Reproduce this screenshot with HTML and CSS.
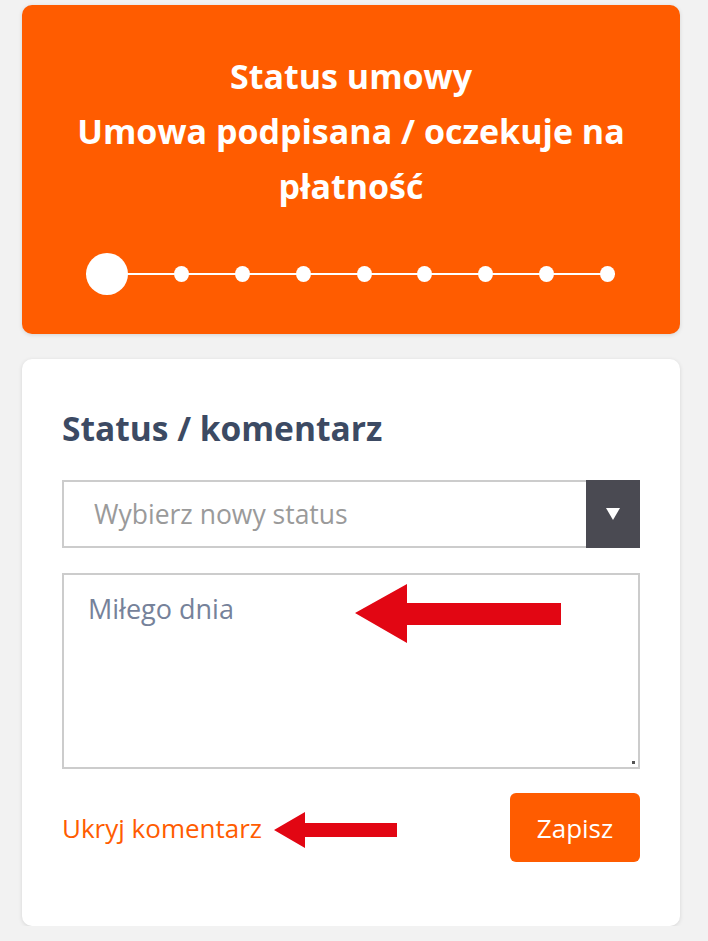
FILE: index.html
```html
<!DOCTYPE html>
<html lang="pl">
<head>
<meta charset="utf-8">
<link rel="stylesheet" href="styles.css">
</head>
<body>
<div class="page">
  <section class="status-card">
    <h1 class="status-title">Status umowy<br>Umowa podpisana / oczekuje na<br>płatność</h1>
    <div class="stepper">
      <span class="step step-current"></span>
      <span class="step"></span>
      <span class="step"></span>
      <span class="step"></span>
      <span class="step"></span>
      <span class="step"></span>
      <span class="step"></span>
      <span class="step"></span>
      <span class="step"></span>
    </div>
  </section>
  <section class="comment-card">
    <h2 class="comment-title">Status / komentarz</h2>
    <div class="select">
      <span class="select-placeholder">Wybierz nowy status</span>
      <span class="select-btn"><svg width="14" height="12" viewBox="0 0 14 12"><path d="M0 0H14L7 12Z" fill="#fff"/></svg></span>
    </div>
    <div class="textarea">
      <span class="textarea-text">Miłego dnia</span>
      <span class="resize"></span>
    </div>
    <div class="actions">
      <a class="hide-link">Ukryj komentarz</a>
      <button class="save-btn">Zapisz</button>
    </div>
  </section>
</div>
<svg class="arrows" width="708" height="941" viewBox="0 0 708 941">
  <path d="M355 613 L407 584 L407 603 L561 603 L561 625 L407 625 L407 643 Z" fill="#e20613"/>
  <path d="M274 830 L305 812 L305 823 L397 823 L397 837 L305 837 L305 848 Z" fill="#e20613"/>
</svg>
</body>
</html>
```
FILE: styles.css
```css
html, body {
  margin: 0;
  padding: 0;
  background: #f2f2f2;
  font-family: "Open Sans", "Noto Sans", sans-serif;
}
.page {
  padding: 5px 28px 0 22px;
  display: flex;
  flex-direction: column;
  gap: 25px;
}
.status-card {
  background: #ff5c00;
  border-radius: 10px;
  height: 329px;
  box-sizing: border-box;
  padding-top: 44px;
  box-shadow: 0 1px 4px rgba(0,0,0,0.12);
}
.status-title {
  margin: 0;
  color: #fff;
  text-align: center;
  font-size: 34px;
  font-weight: 700;
  line-height: 55px;
}
.stepper {
  margin: 39px 0 0 64px;
  width: 529px;
  height: 42px;
  display: flex;
  align-items: center;
  justify-content: space-between;
  background: linear-gradient(#fff, #fff) no-repeat center / 100% 2px;
}
.step {
  width: 15px;
  height: 16px;
  border-radius: 50%;
  background: #fff;
}
.step-current {
  width: 42px;
  height: 42px;
}
.comment-card {
  background: #fff;
  border-radius: 10px;
  height: 567px;
  box-sizing: border-box;
  padding: 48px 40px 0 40px;
  box-shadow: 0 1px 4px rgba(0,0,0,0.12);
}
.comment-title {
  margin: 0;
  color: #3c4a63;
  font-size: 33.5px;
  font-weight: 700;
  line-height: 42px;
}
.select {
  margin-top: 31px;
  height: 68px;
  box-sizing: border-box;
  border: 2px solid #cccccc;
  display: flex;
  align-items: center;
}
.select-placeholder {
  flex: 1;
  padding-left: 30px;
  color: #9a9a9a;
  font-size: 26.5px;
}
.select-btn {
  width: 54px;
  height: 68px;
  margin: -2px -2px -2px 0;
  background: #4a4a52;
  display: flex;
  align-items: center;
  justify-content: center;
}
.textarea {
  position: relative;
  margin-top: 25px;
  height: 196px;
  box-sizing: border-box;
  border: 2px solid #cccccc;
  padding: 16px 24px;
}
.textarea-text {
  color: #76829a;
  font-size: 27px;
  line-height: 36px;
}
.resize {
  position: absolute;
  right: 3px;
  bottom: 3px;
  width: 3px;
  height: 3px;
  background: #555;
}
.actions {
  margin-top: 24px;
  display: flex;
  align-items: center;
  justify-content: space-between;
}
.hide-link {
  color: #ff5c00;
  font-size: 26px;
}
.save-btn {
  width: 130px;
  height: 69px;
  border: none;
  border-radius: 6px;
  background: #ff5c00;
  color: #fff;
  font-family: inherit;
  font-size: 26px;
}
.arrows {
  position: absolute;
  left: 0;
  top: 0;
  pointer-events: none;
}
```
